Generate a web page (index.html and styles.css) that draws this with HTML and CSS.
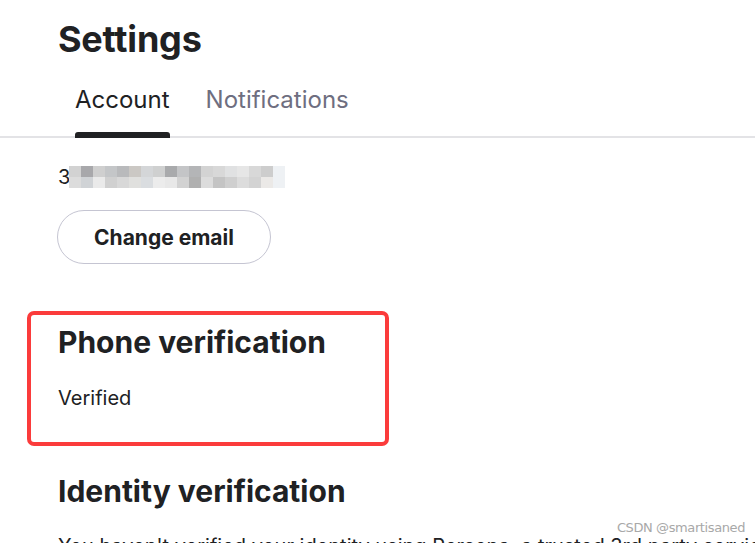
FILE: index.html
```html
<!DOCTYPE html>
<html lang="en">
<head>
<meta charset="utf-8">
<title>Settings</title>
<link rel="stylesheet" href="styles.css">
</head>
<body>
<div class="page">
  <header class="head">
    <h1 class="title">Settings</h1>
    <nav class="tabs">
      <span class="tab active">Account</span>
      <span class="tab">Notifications</span>
    </nav>
  </header>
  <main class="content">
    <div class="email">
      <span class="digit">3</span>
      <span class="mosaic">
        <span class="row">
          <i style="background:#d2d2d2"></i><i style="background:#a8a8ab"></i><i style="background:#cfcfcf"></i><i style="background:#c4c6c8"></i><i style="background:#b9babc"></i><i style="background:#cbc8c4"></i><i style="background:#d4d6d8"></i><i style="background:#cfd0d0"></i><i style="background:#a9aaac"></i><i style="background:#c4c5c7"></i><i style="background:#b4b5b7"></i><i style="background:#d3d3d3"></i><i style="background:#d8d8d8"></i><i style="background:#e0e1e2"></i><i style="background:#e6e6e6"></i><i style="background:#d8d8d8"></i><i style="background:#cdcdcd"></i><i style="background:#eef1f4"></i>
        </span>
        <span class="row">
          <i style="background:#dcdcdc"></i><i style="background:#d0d3d6"></i><i style="background:#eaeaea"></i><i style="background:#d0d0d0"></i><i style="background:#d8d8d8"></i><i style="background:#e0e0de"></i><i style="background:#dadde0"></i><i style="background:#ececec"></i><i style="background:#e8e8e8"></i><i style="background:#d2d2d2"></i><i style="background:#b0b0b0"></i><i style="background:#dcdcdc"></i><i style="background:#c4c4c4"></i><i style="background:#cfcfcf"></i><i style="background:#dcdcdc"></i><i style="background:#d3d3d3"></i><i style="background:#ebe9e7"></i><i style="background:#eef1f4"></i>
        </span>
      </span>
    </div>
    <button class="btn" type="button">Change email</button>

    <section class="section phone">
      <h2 class="h2">Phone verification</h2>
      <p class="text">Verified</p>
      <div class="highlight"></div>
    </section>

    <section class="section identity">
      <h2 class="h2">Identity verification</h2>
      <p class="text">You haven't verified your identity using Persona, a trusted 3rd party service.</p>
    </section>
  </main>
  <div class="watermark">CSDN @smartisaned</div>
</div>
</body>
</html>
```
FILE: styles.css
```css
html, body {
  margin: 0;
  padding: 0;
  background: #ffffff;
}
body {
  font-family: Inter, "Noto Sans", sans-serif;
  color: #202123;
  width: 755px;
  height: 543px;
  overflow: hidden;
}
.page {
  position: relative;
  height: 543px;
  overflow: hidden;
}
.head {
  padding-top: 18px;
  border-bottom: 2px solid #e3e3e6;
}
.title {
  margin: 0 0 0 58px;
  font-size: 36px;
  line-height: 43px;
  font-weight: 700;
  letter-spacing: -0.2px;
}
.tabs {
  display: flex;
  gap: 36px;
  margin: 23px 0 0 75px;
}
.tab {
  position: relative;
  font-size: 24px;
  line-height: 32px;
  padding-bottom: 20px;
  color: #6e6e80;
}
.tab.active {
  color: #202123;
}
.tab.active::after {
  content: "";
  position: absolute;
  left: 0;
  right: 0;
  bottom: -2px;
  height: 6px;
  background: #202123;
  border-radius: 3px 3px 0 0;
}
.content {
  padding-left: 58px;
}
.email {
  display: flex;
  align-items: center;
  margin-top: 27px;
  height: 24px;
  font-size: 20px;
}
.digit {
  line-height: 24px;
}
.mosaic {
  display: flex;
  flex-direction: column;
  margin-left: -1px;
  margin-top: -1px;
}
.row {
  display: flex;
}
.row i {
  display: block;
  width: 12px;
  height: 11px;
}
.btn {
  display: block;
  margin-top: 21px;
  margin-left: -1px;
  width: 214px;
  height: 54px;
  border: 1px solid #c5c5d2;
  border-radius: 27px;
  background: #ffffff;
  font-family: Inter, "Noto Sans", sans-serif;
  font-size: 21px;
  font-weight: 700;
  color: #202123;
  padding: 0;
}
.section {
  position: relative;
}
.phone {
  margin-top: 60px;
}
.h2 {
  margin: 0;
  font-size: 30px;
  line-height: 36px;
  font-weight: 700;
}
.text {
  margin: 24px 0 0;
  font-size: 20px;
  line-height: 28px;
}
.highlight {
  position: absolute;
  box-sizing: border-box;
  left: -31px;
  top: -13px;
  width: 362px;
  height: 135px;
  border: 4px solid #fb3b3b;
  border-radius: 7px;
}
.identity {
  margin-top: 61px;
}
.identity .text {
  white-space: nowrap;
  margin-top: 23px;
}
.watermark {
  position: absolute;
  right: 10px;
  top: 520px;
  font-family: "DejaVu Sans", sans-serif;
  font-size: 13px;
  color: #a8a8a8;
  letter-spacing: -0.4px;
}
```
